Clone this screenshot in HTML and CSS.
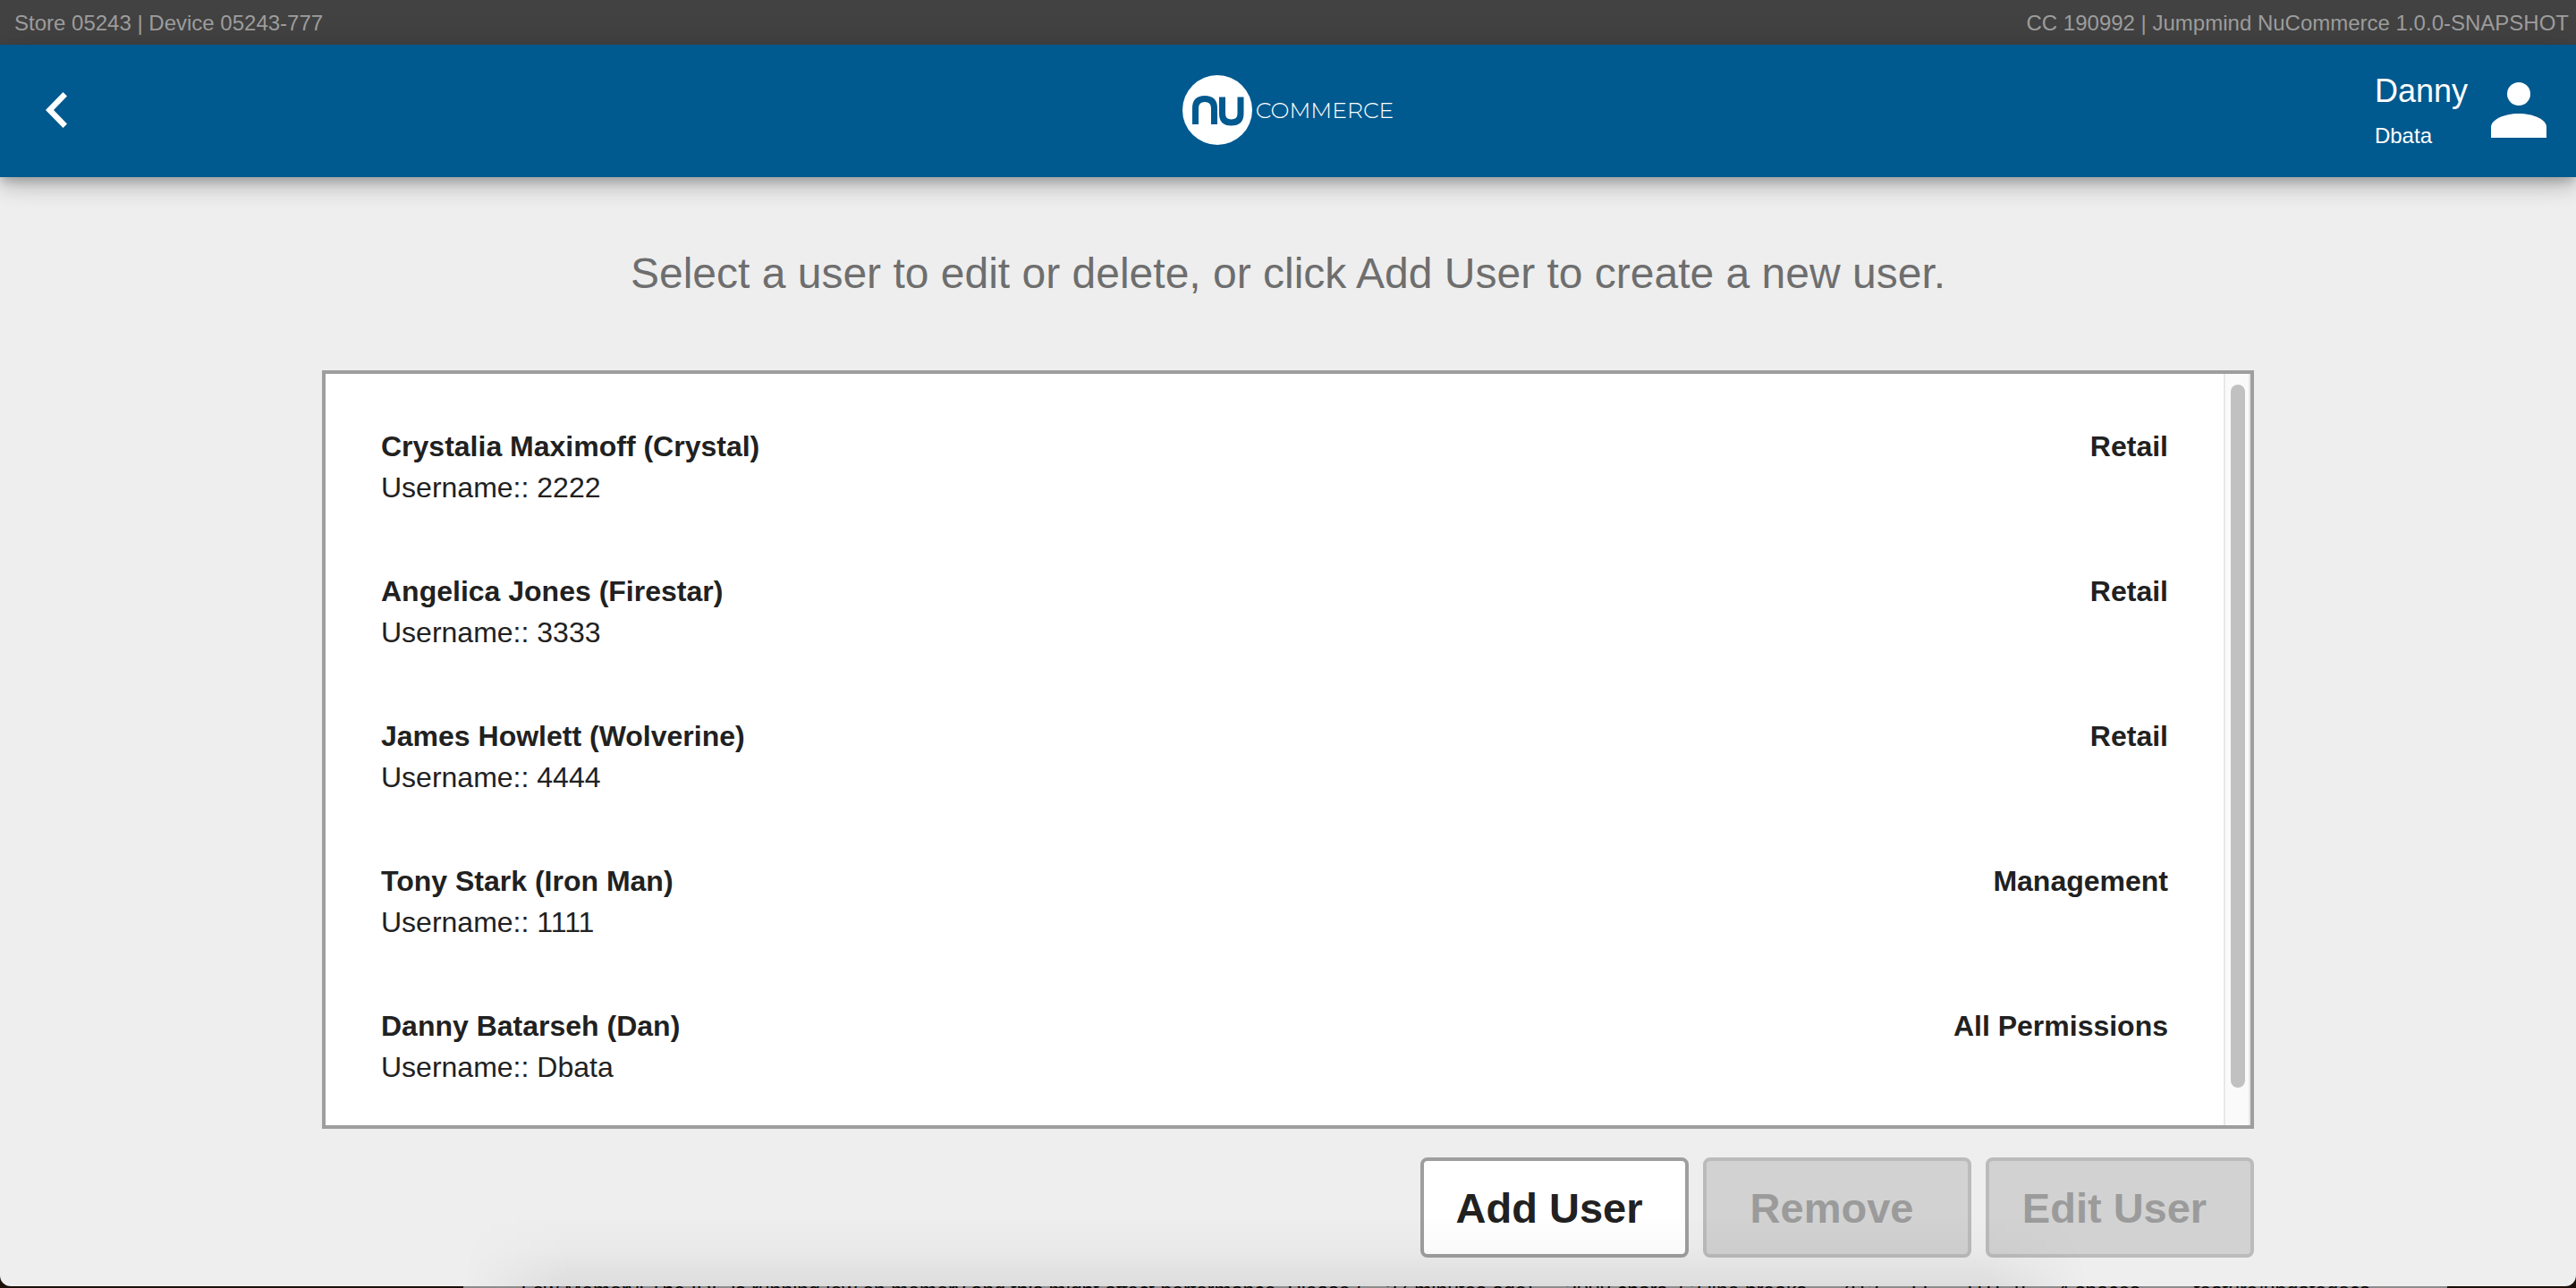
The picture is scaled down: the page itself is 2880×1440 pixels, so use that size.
FILE: index.html
```html
<!DOCTYPE html>
<html lang="en">
<head>
<meta charset="utf-8">
<meta name="viewport" content="width=device-width, initial-scale=1">
<title>Users</title>
<link rel="stylesheet" href="styles.css">
</head>
<body>
<div class="window">
  <div class="status-bar">
    <span>Store 05243 | Device 05243-777</span>
    <span>CC 190992 | Jumpmind NuCommerce 1.0.0-SNAPSHOT</span>
  </div>
  <header class="header">
    <button class="back" type="button" aria-label="Back">
      <svg width="24" height="40" viewBox="0 0 24 40"><path d="M19.500 0 24 4.500 9 20 24 35.500 19.500 40 0 20z" fill="#fff"/></svg>
    </button>
    <div class="logo">
      <svg class="logo-mark" width="78" height="78" viewBox="0 0 78 78">
        <circle cx="39" cy="39" r="39" fill="#fff"/>
        <g fill="none" stroke="#00598f" stroke-width="7">
          <path d="M14.500 55V37Q14.500 26.500 25 26.500Q35.500 26.500 35.500 37V55"/>
          <path d="M44.500 24.500V43Q44.500 53 54.500 53Q65 53 65 43V24.500"/>
        </g>
      </svg>
      <span class="logo-text">COMMERCE</span>
    </div>
    <div class="account">
      <div class="account-text">
        <span class="account-name">Danny</span>
        <span class="account-id">Dbata</span>
      </div>
      <svg width="62" height="62" viewBox="0 0 62 62" fill="#fff"><circle cx="31" cy="13" r="13"/><path d="M0 62V50C0 42 14 35 31 35S62 42 62 50V62z"/></svg>
    </div>
  </header>
  <main class="content">
    <h1 class="prompt">Select a user to edit or delete, or click Add User to create a new user.</h1>
    <div class="list-box">
      <ul class="users">
        <li class="user"><div><div class="strong">Crystalia Maximoff (Crystal)</div><div>Username:: 2222</div></div><div class="strong">Retail</div></li>
        <li class="user"><div><div class="strong">Angelica Jones (Firestar)</div><div>Username:: 3333</div></div><div class="strong">Retail</div></li>
        <li class="user"><div><div class="strong">James Howlett (Wolverine)</div><div>Username:: 4444</div></div><div class="strong">Retail</div></li>
        <li class="user"><div><div class="strong">Tony Stark (Iron Man)</div><div>Username:: 1111</div></div><div class="strong">Management</div></li>
        <li class="user"><div><div class="strong">Danny Batarseh (Dan)</div><div>Username:: Dbata</div></div><div class="strong">All Permissions</div></li>
      </ul>
      <div class="track"><div class="thumb"></div></div>
    </div>
    <div class="actions">
      <button class="action" type="button">Add User</button>
      <button class="action" type="button" disabled>Remove</button>
      <button class="action" type="button" disabled>Edit User</button>
    </div>
  </main>
  <div class="shade"></div>
</div>
<footer class="behind">
  <span class="behind-message">Low Memory: The IDE is running low on memory and this might affect performance. Please (... 27 minutes ago)</span>
  <span>3008 chars, 63 line breaks</span>
  <span>7:13</span>
  <span>LF</span>
  <span>UTF-8</span>
  <span>4 spaces</span>
  <span class="behind-branch">feature/updatedocs</span>
</footer>
</body>
</html>
```
FILE: styles.css
```css
* {
  box-sizing: border-box;
}

body {
  margin: 0;
  background: #1c100a;
  color: #212121;
  font-family: "Liberation Sans", Arial, sans-serif;
  font-size: 32px;
  line-height: 46px;
}

.window {
  position: relative;
  display: flex;
  flex-direction: column;
  height: calc(100vh - 2px);
  overflow: hidden;
  border-radius: 0 0 12px 12px;
  background: #eee;
}

.status-bar {
  display: flex;
  justify-content: space-between;
  height: 50px;
  padding: 0 8px 0 16px;
  background: #424242;
  color: #9e9e9e;
  font-size: 24px;
  line-height: 52px;
}

.header {
  display: grid;
  grid-template-columns: 1fr auto 1fr;
  align-items: center;
  height: 148px;
  padding: 0 33px 2px;
  background: #00598f;
  box-shadow: 0 6px 10px -2px rgba(0, 0, 0, 0.2), 0 12px 20px rgba(0, 0, 0, 0.14), 0 2px 36px rgba(0, 0, 0, 0.12);
  color: #fff;
}

.back {
  justify-self: start;
  display: flex;
  margin-left: 18px;
  padding: 0;
  border: 0;
  background: none;
}

.logo {
  display: flex;
  align-items: center;
  gap: 4px;
}

.logo-text {
  font-family: Montserrat, Lato, sans-serif;
  font-size: 25px;
  font-weight: 300;
}

.account {
  justify-self: end;
  display: flex;
  align-items: center;
  gap: 26px;
}

.account-text {
  display: flex;
  flex-direction: column;
  gap: 10px;
}

.account-name {
  font-size: 36px;
  line-height: 48px;
}

.account-id {
  font-size: 24px;
  line-height: 32px;
}

.content {
  display: flex;
  flex: 1;
  flex-direction: column;
  width: 75%;
  min-height: 0;
  margin: 0 auto;
  padding-bottom: 32px;
}

.prompt {
  margin: 78px 0;
  color: #6e6e6e;
  font-size: 48px;
  font-weight: 400;
  line-height: 60px;
  text-align: center;
}

.list-box {
  display: flex;
  flex: 1;
  min-height: 0;
  overflow: hidden;
  border: 4px solid #9e9e9e;
  background: #fff;
}

.users {
  flex: 1;
  margin: 0;
  padding: 24px 62px 0;
  list-style: none;
}

.user {
  display: flex;
  justify-content: space-between;
  height: 162px;
  padding-top: 34px;
}

.strong {
  font-weight: 700;
}

.track {
  width: 30px;
  padding: 12px 6px 42px;
  border: solid #e8e8e8;
  border-width: 0 2px;
  background: #fafafa;
}

.thumb {
  width: 16px;
  height: 100%;
  margin: 0 auto;
  border-radius: 8px;
  background: #c1c1c1;
}

.actions {
  display: flex;
  justify-content: flex-end;
  gap: 16px;
  margin-top: 32px;
}

.action {
  width: 300px;
  height: 112px;
  padding: 0 12px 0 0;
  border: 4px solid #9e9e9e;
  border-radius: 8px;
  background: #fff;
  color: #212121;
  font: 700 47px "Liberation Sans", Arial, sans-serif;
}

.action:disabled {
  border-color: #bbb;
  background: #d2d2d2;
  color: #9b9b9b;
}

/* Soft shadow rising from the bottom edge of the window */
.shade {
  position: absolute;
  right: 19%;
  bottom: 0;
  left: 18%;
  height: 80px;
  background: linear-gradient(transparent, rgba(0, 0, 0, 0.02) 50%, rgba(0, 0, 0, 0.07));
  -webkit-mask-image: linear-gradient(90deg, transparent, #000 120px, #000 calc(100% - 120px), transparent);
  mask-image: linear-gradient(90deg, transparent, #000 120px, #000 calc(100% - 120px), transparent);
  pointer-events: none;
}

/* Sliver of the editor's status line under the window */
.behind {
  display: flex;
  gap: 36px;
  height: 2px;
  margin: 0 5% 0 18%;
  padding-left: 64px;
  overflow: hidden;
  background: #8c8c8c;
  color: #000;
  font-size: 23px;
  line-height: 10px;
  white-space: nowrap;
}

.behind-branch {
  margin-left: 24px;
}
```
